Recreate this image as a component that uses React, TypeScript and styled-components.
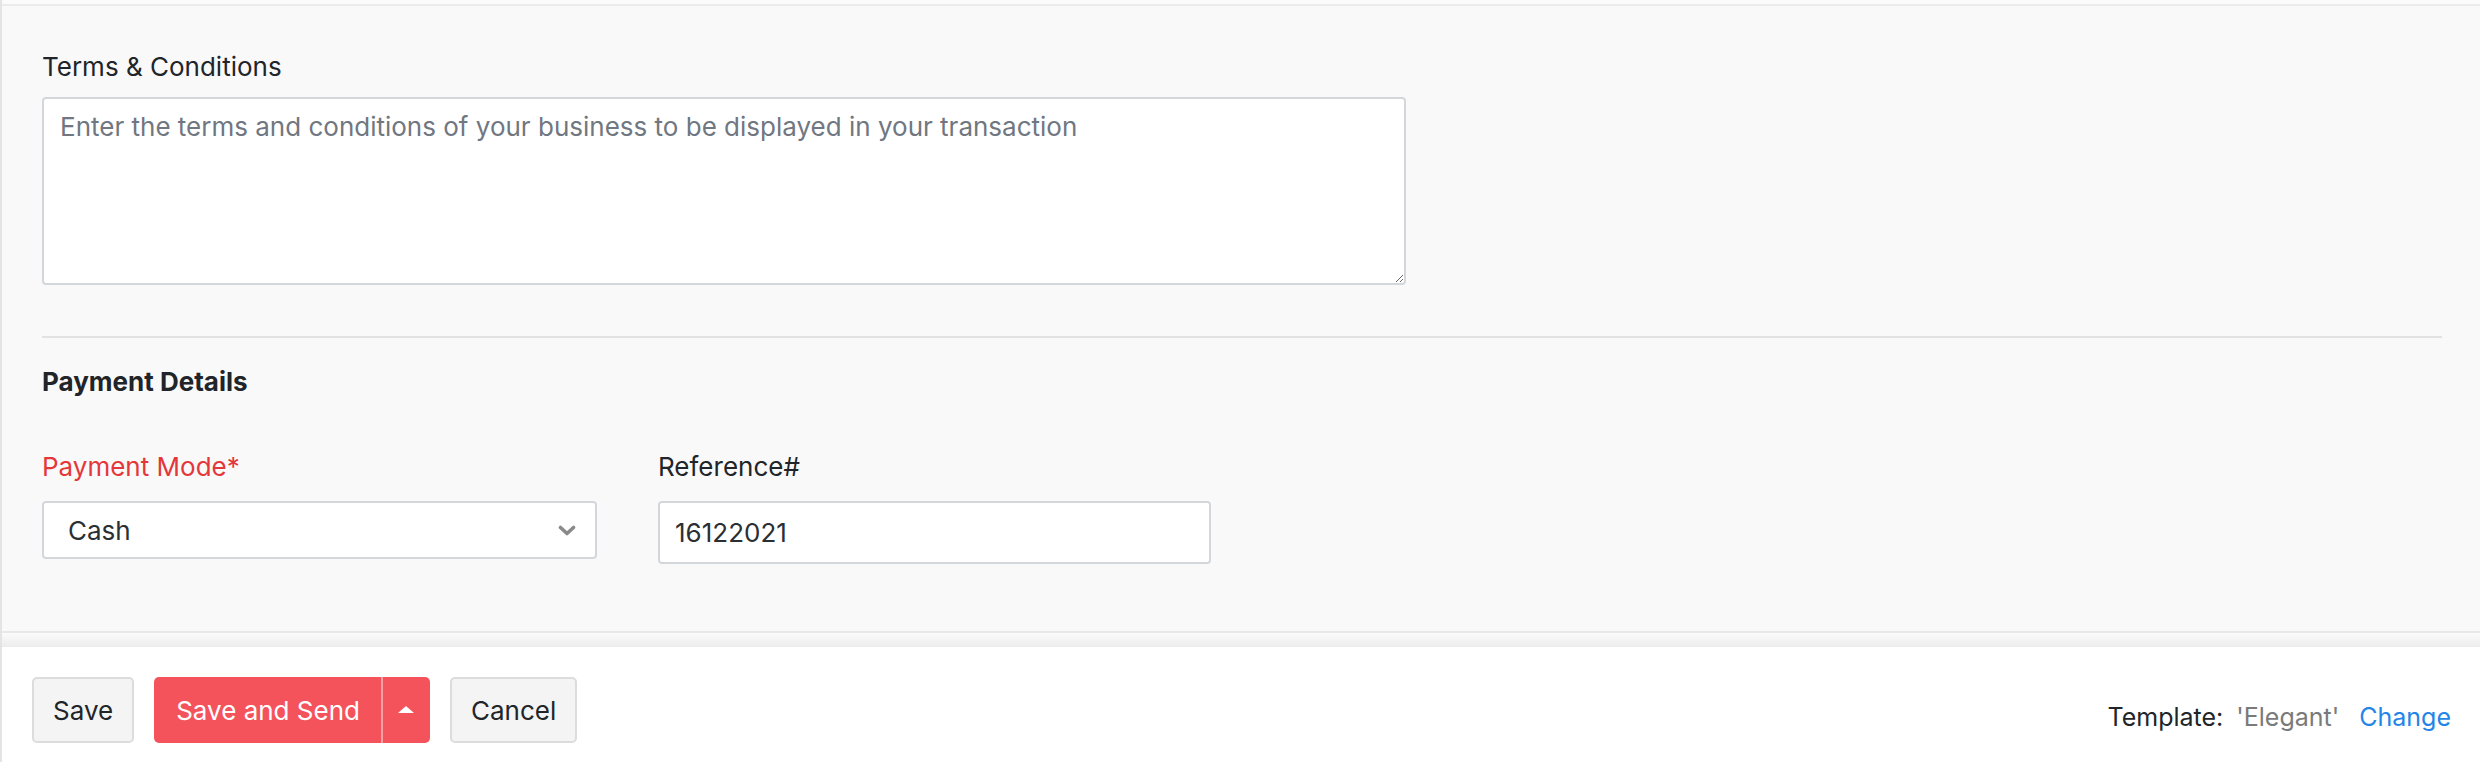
import React from "react";
import styled, { createGlobalStyle } from "styled-components";

const GlobalStyle = createGlobalStyle`
  html, body {
    margin: 0;
    padding: 0;
    background: #ffffff;
  }
  body {
    font-family: Inter, "Noto Sans", "Liberation Sans", sans-serif;
    color: #212529;
  }
  * { box-sizing: border-box; }
`;

const Page = styled.div`
  display: flex;
  flex-direction: column;
  min-height: 762px;
  border-left: 2px solid #e4e4e4;
  background: #ffffff;
`;

const TopStrip = styled.div`
  height: 4px;
  background: #fbfbfb;
`;

const Main = styled.section`
  background: #f9f9f9;
  border-top: 2px solid #ebebeb;
  border-bottom: 2px solid #e8e8e8;
  padding: 43px 38px 67px 40px;
  display: flex;
  flex-direction: column;
`;

const Label = styled.label<{ $required?: boolean }>`
  display: block;
  font-size: 26px;
  line-height: 36px;
  color: ${(p) => (p.$required ? "#e4373b" : "#212529")};
`;

const TextArea = styled.textarea`
  display: block;
  margin-top: 12px;
  width: 1364px;
  height: 188px;
  padding: 10px 16px;
  border: 2px solid #d3d7dc;
  border-radius: 4px;
  background: #ffffff;
  font-family: inherit;
  font-size: 26px;
  line-height: 36px;
  color: #212529;
  resize: both;
  outline: none;
  &::placeholder {
    color: #707781;
  }
`;

const Divider = styled.hr`
  margin: 51px 0 0 0;
  border: none;
  height: 2px;
  background: #e2e2e2;
`;

const SectionTitle = styled.h3`
  margin: 26px 0 0 0;
  font-size: 26px;
  line-height: 36px;
  font-weight: 700;
  color: #212529;
`;

const FieldRow = styled.div`
  margin-top: 49px;
  display: grid;
  grid-template-columns: 555px 553px;
  column-gap: 61px;
  align-items: start;
`;

const FieldCol = styled.div`
  display: flex;
  flex-direction: column;
  gap: 16px;
`;

const SelectBox = styled.div`
  height: 58px;
  display: flex;
  align-items: center;
  justify-content: space-between;
  padding: 0 19px 0 24px;
  background: #ffffff;
  border: 2px solid #d3d7dc;
  border-radius: 4px;
  font-size: 26px;
  color: #2b2f33;
`;

const TextInput = styled.input`
  height: 63px;
  width: 100%;
  padding: 0 15px;
  background: #ffffff;
  border: 2px solid #d3d7dc;
  border-radius: 4px;
  font-family: inherit;
  font-size: 26px;
  color: #2b2f33;
  outline: none;
`;

const ShadowStrip = styled.div`
  height: 14px;
  background: linear-gradient(#fbfbfb, #ececec);
`;

const Footer = styled.footer`
  flex: 1;
  background: #ffffff;
  display: flex;
  justify-content: space-between;
  align-items: flex-start;
  padding: 30px 29px 0 30px;
`;

const ButtonGroup = styled.div`
  display: flex;
  gap: 20px;
`;

const PlainButton = styled.button`
  height: 66px;
  padding: 0 19px;
  background: #f4f4f4;
  border: 2px solid #dcdcdc;
  border-radius: 5px;
  font-family: inherit;
  font-size: 26px;
  color: #212529;
  cursor: pointer;
`;

const SplitButton = styled.div`
  height: 66px;
  display: flex;
  border-radius: 5px;
  overflow: hidden;
  background: #f5535c;
`;

const PrimaryButton = styled.button`
  height: 100%;
  padding: 0 21px 0 22px;
  background: transparent;
  border: none;
  border-right: 2px solid rgba(255, 255, 255, 0.45);
  font-family: inherit;
  font-size: 26px;
  color: #ffffff;
  cursor: pointer;
`;

const CaretButton = styled.button`
  width: 47px;
  height: 100%;
  display: flex;
  align-items: center;
  justify-content: center;
  background: transparent;
  border: none;
  padding: 0;
  cursor: pointer;
`;

const TemplateInfo = styled.div`
  margin-top: 22px;
  display: flex;
  align-items: baseline;
  font-size: 25px;
  line-height: 36px;
  color: #212529;
`;

const TemplateName = styled.span`
  margin-left: 13px;
  color: #7a7a7a;
`;

const ChangeLink = styled.a`
  margin-left: 20px;
  color: #2485e8;
  text-decoration: none;
  cursor: pointer;
`;

const Chevron = () => (
  <svg width="18" height="11" viewBox="0 0 18 11" aria-hidden="true">
    <polyline
      points="2.5,2.5 9,8.5 15.5,2.5"
      fill="none"
      stroke="#8a8a8a"
      strokeWidth="3.6"
      strokeLinecap="round"
      strokeLinejoin="round"
    />
  </svg>
);

const CaretUp = () => (
  <svg width="16" height="8" viewBox="0 0 16 8" aria-hidden="true">
    <polygon points="0,7 8,0 16,7" fill="#ffffff" />
  </svg>
);

export default function App() {
  return (
    <>
      <GlobalStyle />
      <Page>
        <TopStrip />
        <Main>
          <Label htmlFor="terms">Terms &amp; Conditions</Label>
          <TextArea
            id="terms"
            placeholder="Enter the terms and conditions of your business to be displayed in your transaction"
          />
          <Divider />
          <SectionTitle>Payment Details</SectionTitle>
          <FieldRow>
            <FieldCol>
              <Label $required>Payment Mode*</Label>
              <SelectBox>
                <span>Cash</span>
                <Chevron />
              </SelectBox>
            </FieldCol>
            <FieldCol>
              <Label htmlFor="ref">Reference#</Label>
              <TextInput id="ref" defaultValue="16122021" />
            </FieldCol>
          </FieldRow>
        </Main>
        <ShadowStrip />
        <Footer>
          <ButtonGroup>
            <PlainButton>Save</PlainButton>
            <SplitButton>
              <PrimaryButton>Save and Send</PrimaryButton>
              <CaretButton aria-label="More options">
                <CaretUp />
              </CaretButton>
            </SplitButton>
            <PlainButton>Cancel</PlainButton>
          </ButtonGroup>
          <TemplateInfo>
            Template:
            <TemplateName>'Elegant'</TemplateName>
            <ChangeLink>Change</ChangeLink>
          </TemplateInfo>
        </Footer>
      </Page>
    </>
  );
}
